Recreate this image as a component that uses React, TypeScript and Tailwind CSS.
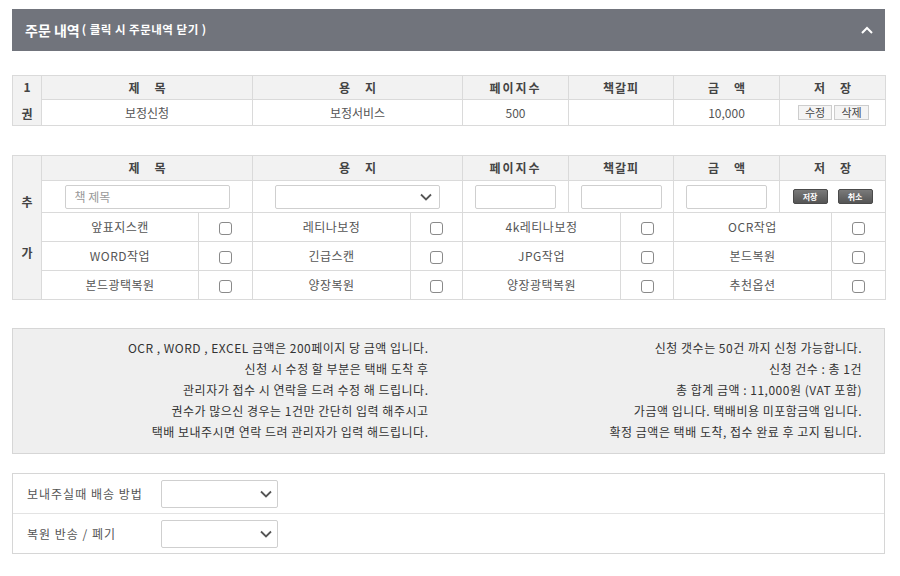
import React from "react";

const F = "font-['Noto_Sans_CJK_KR','Noto_Sans',sans-serif]";

function Sp({ a, b }: { a: string; b: string }) {
  return (
    <span className="inline-flex gap-[15px]">
      <span>{a}</span>
      <span>{b}</span>
    </span>
  );
}

function Chevron({ className = "" }: { className?: string }) {
  return (
    <svg width="12" height="8" viewBox="0 0 12 8" className={className}>
      <polyline points="1,1.5 6,6.5 11,1.5" fill="none" stroke="#555" strokeWidth="1.8" />
    </svg>
  );
}

function Check() {
  return <span className="inline-block w-[13px] h-[13px] border border-[#8a8a8a] rounded-[3px] bg-white align-middle" />;
}

function Select({ w }: { w: string }) {
  return (
    <div className={`${w} h-[24px] border border-[#cfcfcf] rounded-[2px] bg-white flex items-center justify-end pr-[7px] mx-auto`}>
      <Chevron />
    </div>
  );
}

function Input({ w, ph }: { w: string; ph?: string }) {
  return (
    <div className={`${w} h-[24px] border border-[#cfcfcf] rounded-[2px] bg-white flex items-center pl-[9px] mx-auto text-[12px] text-[#999]`}>
      {ph}
    </div>
  );
}

const th = "border border-[#dadada] bg-[#f2f2f2] text-[12px] font-bold text-[#444] text-center p-0";
const td = "border border-[#dadada] text-[12px] text-[#555] text-center p-0";

export default function App() {
  return (
    <div className={`${F} w-[900px] h-[576px] bg-white pt-[9px] px-[12px]`}>
      {/* header bar */}
      <div className="w-[873px] h-[42px] bg-[#71747c] flex items-center justify-between pl-[13px] pr-[12px]">
        <div className="flex items-center text-white font-bold">
          <span className="text-[14px]">주문 내역</span>
          <span className="text-[11.5px] ml-[2px] tracking-[0.5px]">( 클릭 시 주문내역 닫기 )</span>
        </div>
        <svg width="12" height="8" viewBox="0 0 12 8">
          <polyline points="1,7 6,2 11,7" fill="none" stroke="#fff" strokeWidth="2" />
        </svg>
      </div>

      {/* table 1 */}
      <table className="mt-[24px] w-[873px] border-collapse table-fixed">
        <colgroup>
          <col className="w-[29px]" />
          <col className="w-[211px]" />
          <col className="w-[210px]" />
          <col className="w-[106px]" />
          <col className="w-[105px]" />
          <col className="w-[106px]" />
          <col className="w-[106px]" />
        </colgroup>
        <tbody>
          <tr className="h-[24px]">
            <td rowSpan={2} className={`${th} align-top`}>
              <div className="flex flex-col items-center h-[49px] justify-between py-[2px]">
                <span>1</span>
                <span>권</span>
              </div>
            </td>
            <td className={th}><Sp a="제" b="목" /></td>
            <td className={th}><Sp a="용" b="지" /></td>
            <td className={`${th} tracking-[2px]`}>페이지수</td>
            <td className={`${th} tracking-[1px]`}>책갈피</td>
            <td className={th}><Sp a="금" b="액" /></td>
            <td className={th}><Sp a="저" b="장" /></td>
          </tr>
          <tr className="h-[26px]">
            <td className={td}>보정신청</td>
            <td className={td}>보정서비스</td>
            <td className={td}>500</td>
            <td className={td}></td>
            <td className={td}>10,000</td>
            <td className={td}>
              <div className="flex justify-center gap-[2px] pl-[2px]">
                <span className="h-[15px] w-[34px] border border-[#cdcdcd] bg-[#f4f4f4] text-[11px] leading-[13px] text-[#444]">수정</span>
                <span className="h-[15px] w-[35px] border border-[#cdcdcd] bg-[#f4f4f4] text-[11px] leading-[13px] text-[#444]">삭제</span>
              </div>
            </td>
          </tr>
        </tbody>
      </table>

      {/* table 2 */}
      <table className="mt-[29px] w-[873px] border-collapse table-fixed">
        <colgroup>
          <col className="w-[29px]" />
          <col className="w-[157px]" />
          <col className="w-[54px]" />
          <col className="w-[158px]" />
          <col className="w-[52px]" />
          <col className="w-[106px]" />
          <col className="w-[52px]" />
          <col className="w-[53px]" />
          <col className="w-[106px]" />
          <col className="w-[52px]" />
          <col className="w-[54px]" />
        </colgroup>
        <tbody>
          <tr className="h-[25px]">
            <td rowSpan={5} className={`${th} font-bold`}>
              <div className="flex flex-col items-center gap-[33px]">
                <span>추</span>
                <span>가</span>
              </div>
            </td>
            <td colSpan={2} className={th}><Sp a="제" b="목" /></td>
            <td colSpan={2} className={th}><Sp a="용" b="지" /></td>
            <td className={`${th} tracking-[2px]`}>페이지수</td>
            <td colSpan={2} className={`${th} tracking-[1px]`}>책갈피</td>
            <td className={th}><Sp a="금" b="액" /></td>
            <td colSpan={2} className={th}><Sp a="저" b="장" /></td>
          </tr>
          <tr className="h-[32px]">
            <td colSpan={2} className={td}><Input w="w-[165px]" ph="책 제목" /></td>
            <td colSpan={2} className={td}><Select w="w-[165px]" /></td>
            <td className={td}><Input w="w-[81px]" /></td>
            <td colSpan={2} className={td}><Input w="w-[81px]" /></td>
            <td className={td}><Input w="w-[81px]" /></td>
            <td colSpan={2} className={td}>
              <div className="flex justify-center gap-[10px]">
                <span className="w-[35px] h-[15px] rounded-[2px] bg-gradient-to-b from-[#7a7a7a] to-[#555] border border-[#4a4a4a] text-white text-[8px] font-bold leading-[13px]">저장</span>
                <span className="w-[35px] h-[15px] rounded-[2px] bg-gradient-to-b from-[#7a7a7a] to-[#555] border border-[#4a4a4a] text-white text-[8px] font-bold leading-[13px]">취소</span>
              </div>
            </td>
          </tr>
          {[
            ["앞표지스캔", "레티나보정", "4k레티나보정", "OCR작업"],
            ["WORD작업", "긴급스캔", "JPG작업", "본드복원"],
            ["본드광택복원", "양장복원", "양장광택복원", "추천옵션"],
          ].map((row, i) => (
            <tr key={i} className="h-[29px]">
              <td className={`${td} tracking-[0.5px]`}>{row[0]}</td>
              <td className={td}><Check /></td>
              <td className={`${td} tracking-[0.5px]`}>{row[1]}</td>
              <td className={td}><Check /></td>
              <td colSpan={2} className={`${td} tracking-[0.5px]`}>{row[2]}</td>
              <td className={td}><Check /></td>
              <td colSpan={2} className={`${td} tracking-[0.5px]`}>{row[3]}</td>
              <td className={td}><Check /></td>
            </tr>
          ))}
        </tbody>
      </table>

      {/* info box */}
      <div className="mt-[28px] w-[873px] h-[126px] bg-[#efefef] border border-[#d6d6d6] grid grid-cols-2 py-[8px] text-[12px] text-[#333] leading-[21px] tracking-[0.5px]">
        <div className="flex flex-col items-end pr-[20px]">
          <span>OCR , WORD , EXCEL 금액은 200페이지 당 금액 입니다.</span>
          <span>신청 시 수정 할 부분은 택배 도착 후</span>
          <span>관리자가 접수 시 연락을 드려 수정 해 드립니다.</span>
          <span>권수가 많으신 경우는 1건만 간단히 입력 해주시고</span>
          <span>택배 보내주시면 연락 드려 관리자가 입력 해드립니다.</span>
        </div>
        <div className="flex flex-col items-end pr-[22px]">
          <span>신청 갯수는 50건 까지 신청 가능합니다.</span>
          <span>신청 건수 : 총 1건</span>
          <span>총 합계 금액 : 11,000원 (VAT 포함)</span>
          <span>가금액 입니다. 택배비용 미포함금액 입니다.</span>
          <span>확정 금액은 택배 도착, 접수 완료 후 고지 됩니다.</span>
        </div>
      </div>

      {/* bottom box */}
      <div className="mt-[19px] w-[873px] border border-[#d6d6d6] text-[12px] text-[#555]">
        <div className="h-[40px] flex items-center border-b border-[#e3e3e3] pl-[14px]">
          <span className="w-[134px] tracking-[1px]">보내주실때 배송 방법</span>
          <div className="w-[117px] h-[28px] border border-[#cfcfcf] rounded-[2px] bg-white flex items-center justify-end pr-[5px]">
            <Chevron />
          </div>
        </div>
        <div className="h-[39px] flex items-center pl-[14px]">
          <span className="w-[134px] tracking-[1px]">복원 반송 / 폐기</span>
          <div className="w-[117px] h-[28px] border border-[#cfcfcf] rounded-[2px] bg-white flex items-center justify-end pr-[5px]">
            <Chevron />
          </div>
        </div>
      </div>
    </div>
  );
}
